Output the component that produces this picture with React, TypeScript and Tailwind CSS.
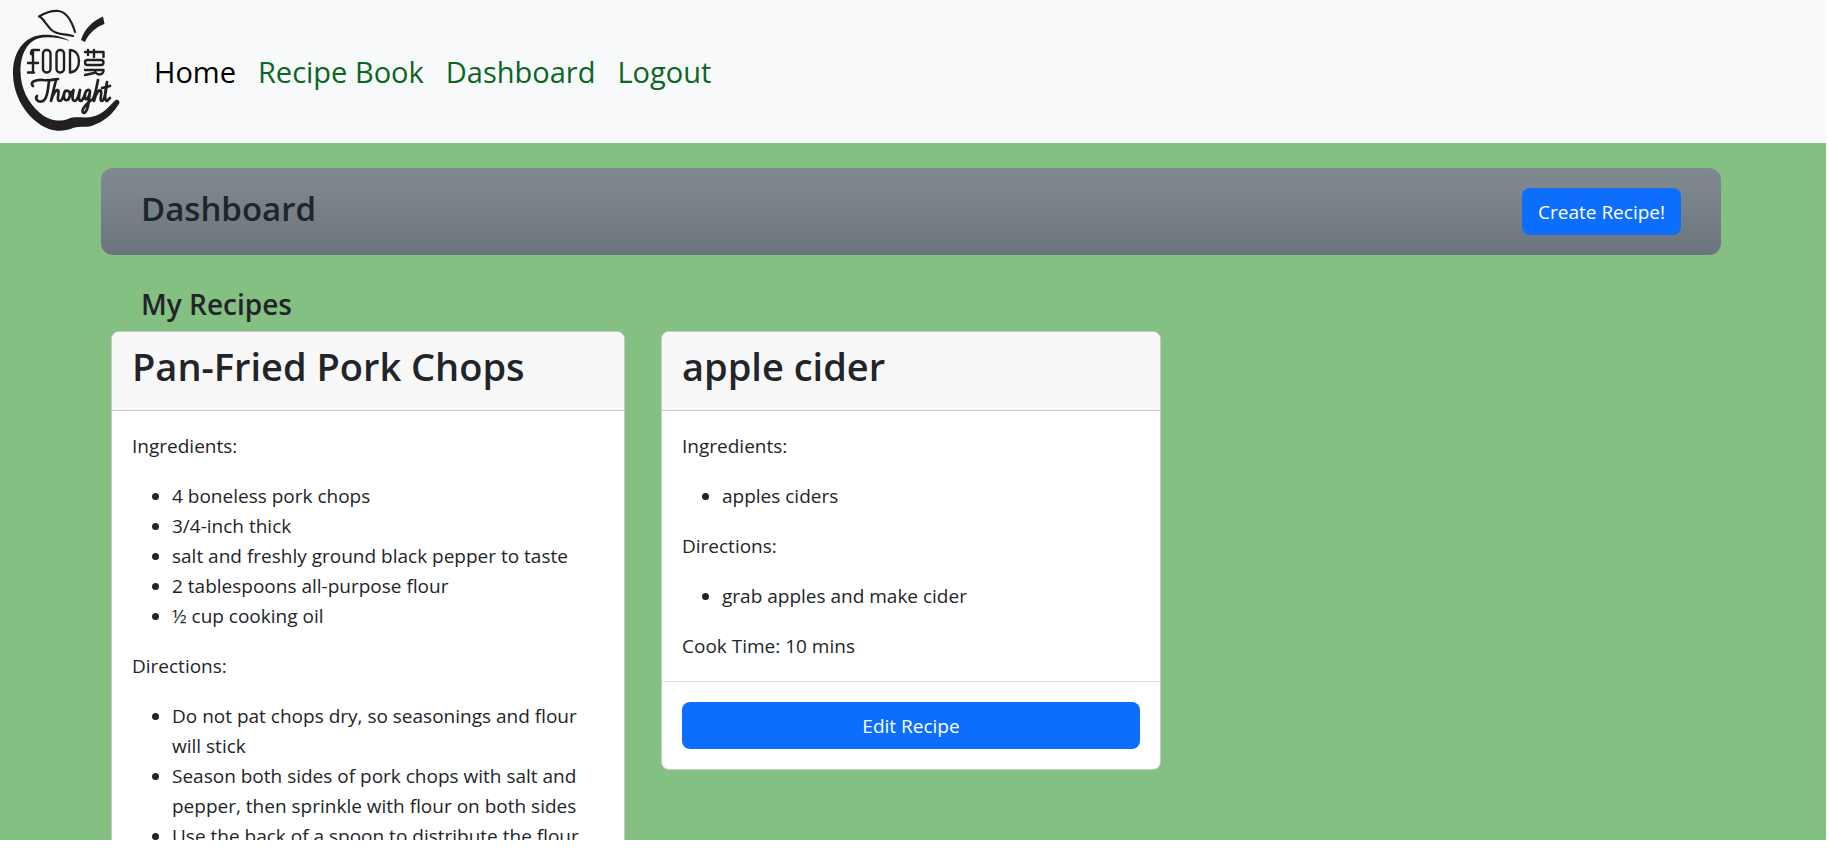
import React from "react";

type Recipe = {
  title: string;
  ingredients: string[];
  directions: string[];
  cookTime: string;
};

const recipes: Recipe[] = [
  {
    title: "Pan-Fried Pork Chops",
    ingredients: [
      "4 boneless pork chops",
      "3/4-inch thick",
      "salt and freshly ground black pepper to taste",
      "2 tablespoons all-purpose flour",
      "½ cup cooking oil",
    ],
    directions: [
      "Do not pat chops dry, so seasonings and flour will stick",
      "Season both sides of pork chops with salt and pepper, then sprinkle with flour on both sides",
      "Use the back of a spoon to distribute the flour",
    ],
    cookTime: "10 mins",
  },
  {
    title: "apple cider",
    ingredients: ["apples ciders"],
    directions: ["grab apples and make cider"],
    cookTime: "10 mins",
  },
];

function Logo() {
  return (
    <svg viewBox="0 0 140 143" className="h-[143px] w-[140px]" role="img" aria-label="Food for Thought" fill="none" stroke="#231f20" strokeLinecap="round" strokeLinejoin="round">
      <path fill="#231f20" stroke="none" d="M70 41C60 35 46 33.500 36 36C22 40 13 54 13 73C13 93 23 112 38 123C50 132 62 132.500 73 128C81 125.500 87 128.500 95 124.500C107 120 114 112 119.500 103C119.500 99.500 116.500 98.500 114 101.500C107 109 101 115 93 116.500C84 119 76 115.500 68 119C58 122.500 48 120 40 113C28 103 20.500 88 20.500 71C20.500 55 27 42 38 38.500C48 36 60 38 70 41Z" />
      <path strokeWidth="2.200" d="M39 16.500C44 13.500 52 10.500 58.500 11C67 12 72 22 75 32M39.500 16.500C44 19 46 25 51.500 30C57 35 63 33.500 73 36" />
      <path fill="#231f20" stroke="none" d="M81 40C84 30 92 21 103 16.500L104.500 24C96 27 89 33 85 42Z" />
      <g strokeWidth="2.400">
        <path d="M33 72.500V50H39M28 63H38M28 72.500H34M33 50C31 50 31 53 31 54" />
        <rect x="43" y="50" width="7.500" height="22.500" rx="3.500" />
        <rect x="56.500" y="50" width="7.500" height="22.500" rx="3.500" />
        <path d="M70 50V72.500C76 72 79 67 79 61C79 55 76 50.500 70 50Z" />
        <path d="M103.500 57V52H85M94 50V57M88 50V55" />
        <rect x="85" y="60" width="18.500" height="5" rx="2.500" />
        <path d="M85 70H103.500M103.500 70C104 76 95 76 95 70M94 73L85 75" />
      </g>
      <g strokeWidth="2.700">
        <path d="M33 86C29 82 36 79.500 43 80C49 81 56 79 58 79M49 81C48 90 47 101.500 41 101.500C37 102 35 98 37 96" />
        <path d="M56 80C54 88 52 96 51 101C53 93 57 88 58.500 91C59 95 56 101 60 101C62 101 63 97 64 94C65 89 70 90 70 95C69 102 63 102 64 95M70 93C72 92 73 91 73.500 90C72 97 72 101 75 101C78 100 79 94 80 90C79 96 78 101 81 101C83 100 84 97 85 94C86 89 90 89 90 92C88 101 84 101 85 95M90 91C89 101 88 112 84 113C80 112 84 105 93 99C96 92 97 85 98 80C96 89 95 96 94 101C96 93 99 89 101 91C102 95 99 101 102 101C105 100 106 91 107 82C105 92 104 101 107 101L110 98M102 88L110 86" />
      </g>
    </svg>
  );
}

function BulletList({ items }: { items: string[] }) {
  return (
    <ul className="mb-5 list-disc pl-10">
      {items.map((item) => (
        <li key={item}>{item}</li>
      ))}
    </ul>
  );
}

function RecipeCard({ recipe }: { recipe: Recipe }) {
  return (
    <article className="overflow-hidden rounded-lg border border-[#c8cbc8] bg-white">
      <header className="border-b border-[#c8c8c8] bg-[#f8f8f8] px-5 pt-2.5 pb-5">
        <h3 className="text-[38px] leading-12 font-semibold">{recipe.title}</h3>
      </header>
      <div className="px-5 pt-5">
        <p className="mb-5">Ingredients:</p>
        <BulletList items={recipe.ingredients} />
        <p className="mb-5">Directions:</p>
        <BulletList items={recipe.directions} />
        <p className="mb-5">Cook Time: {recipe.cookTime}</p>
      </div>
      <footer className="border-t border-[#dfdfdf] p-5">
        <button type="button" className="h-[47px] w-full rounded-lg bg-[#0d6efd] text-white">
          Edit Recipe
        </button>
      </footer>
    </article>
  );
}

export default function App() {
  return (
    <div className="h-screen overflow-hidden bg-white pr-[3px] pb-[11px] font-['Open_Sans','Noto_Sans',sans-serif] text-[19px] leading-[30px] text-[#212529]">
      <div className="flex h-full flex-col overflow-hidden bg-[#85c083]">
        <header className="flex shrink-0 items-center bg-[#f8f9fa]">
          <a href="#home">
            <Logo />
          </a>
          <nav className="flex gap-[22px] pl-3.5 text-[29px] leading-[44px] text-[#0b6623]">
            <a href="#home" className="text-black">Home</a>
            <a href="#recipes">Recipe Book</a>
            <a href="#dashboard">Dashboard</a>
            <a href="#logout">Logout</a>
          </nav>
        </header>
        <div className="pr-1">
          <main className="mx-auto w-full max-w-[1650px] px-[15px] pt-[25px]">
            <div className="flex items-center justify-between rounded-xl bg-linear-to-b from-[#828a91] to-[#6c757d] px-10 py-5">
              <h1 className="self-start text-[33px] leading-[42px] font-semibold">Dashboard</h1>
              <button type="button" className="h-[47px] rounded-lg bg-[#0d6efd] px-4 text-white">
                Create Recipe!
              </button>
            </div>
            <h2 className="mt-8 mb-2.5 px-10 text-[28px] leading-[34px] font-semibold">My Recipes</h2>
            <div className="flex items-start gap-9 px-2.5">
              <div className="w-[514px]">
                <RecipeCard recipe={recipes[0]} />
              </div>
              <div className="w-[500px]">
                <RecipeCard recipe={recipes[1]} />
              </div>
            </div>
          </main>
        </div>
      </div>
    </div>
  );
}
